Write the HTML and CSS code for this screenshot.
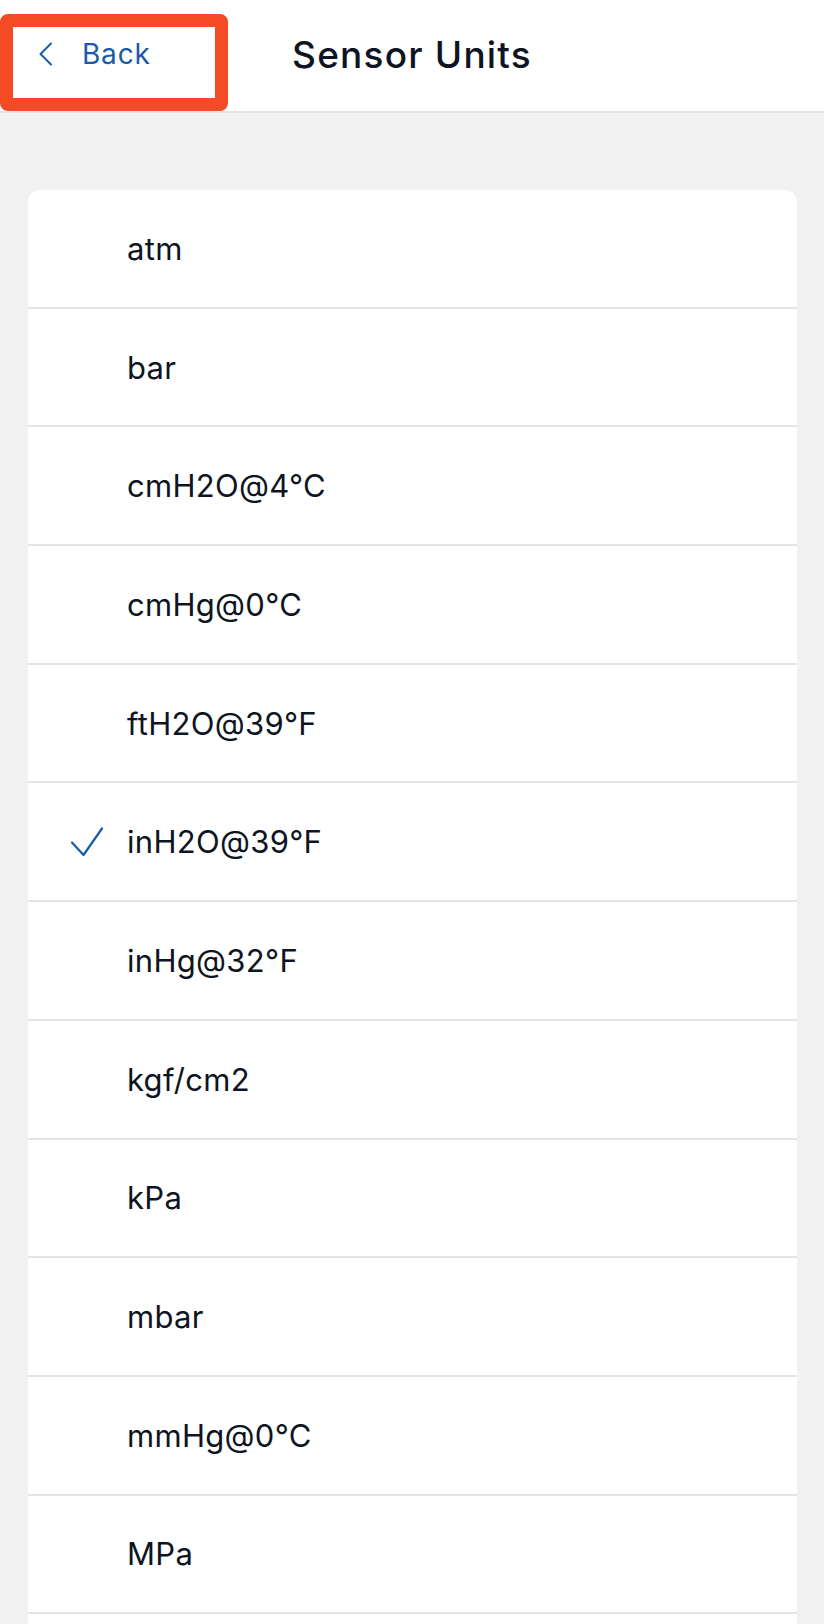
FILE: index.html
```html
<!DOCTYPE html>
<html lang="en">
<head>
<meta charset="utf-8">
<title>Sensor Units</title>
<link rel="stylesheet" href="styles.css">
</head>
<body>
<header class="topbar">
  <div class="topbar-left">
    <button class="back" type="button">
      <svg class="back-icon" width="16" height="24" viewBox="0 0 16 24" aria-hidden="true">
        <path d="M13 1.5 L2.5 12 L13 22.5" fill="none" stroke="currentColor" stroke-width="2" stroke-linecap="round" stroke-linejoin="round"/>
      </svg>
      <span>Back</span>
    </button>
  </div>
  <h1 class="title">Sensor Units</h1>
  <div class="topbar-right"></div>
  <div class="highlight"></div>
</header>

<main class="content">
  <ul class="list">
    <li class="row"><span class="check"></span><span class="label">atm</span></li>
    <li class="row"><span class="check"></span><span class="label">bar</span></li>
    <li class="row"><span class="check"></span><span class="label">cmH2O@4°C</span></li>
    <li class="row"><span class="check"></span><span class="label">cmHg@0°C</span></li>
    <li class="row"><span class="check"></span><span class="label">ftH2O@39°F</span></li>
    <li class="row selected">
      <span class="check">
        <svg width="34" height="30" viewBox="0 0 34 30" aria-hidden="true">
          <path d="M2 15.5 L13.5 28 L32 1.5" fill="none" stroke="currentColor" stroke-width="2.2" stroke-linecap="round" stroke-linejoin="round"/>
        </svg>
      </span>
      <span class="label">inH2O@39°F</span>
    </li>
    <li class="row"><span class="check"></span><span class="label">inHg@32°F</span></li>
    <li class="row"><span class="check"></span><span class="label">kgf/cm2</span></li>
    <li class="row"><span class="check"></span><span class="label">kPa</span></li>
    <li class="row"><span class="check"></span><span class="label">mbar</span></li>
    <li class="row"><span class="check"></span><span class="label">mmHg@0°C</span></li>
    <li class="row"><span class="check"></span><span class="label">MPa</span></li>
  </ul>
</main>
</body>
</html>
```

FILE: styles.css
```css
* {
  box-sizing: border-box;
}

html, body {
  margin: 0;
  padding: 0;
}

body {
  background: #f1f1f2;
  font-family: Inter, "Noto Sans", "Liberation Sans", sans-serif;
  color: #0e1422;
}

.topbar {
  position: relative;
  height: 113px;
  background: #ffffff;
  border-bottom: 2px solid #e3e3e8;
  display: grid;
  grid-template-columns: 1fr auto 1fr;
  align-items: center;
  padding-bottom: 3px;
}

.topbar-left {
  padding-left: 38px;
}

.back {
  display: flex;
  align-items: center;
  gap: 28px;
  border: 0;
  background: transparent;
  padding: 0;
  color: #1c5aa9;
  font-family: inherit;
  font-size: 28px;
  font-weight: 400;
  letter-spacing: 0.8px;
  cursor: pointer;
}

.back-icon {
  display: block;
}

.title {
  margin: 0;
  font-size: 37px;
  font-weight: 500;
  color: #0e1422;
  letter-spacing: 1.2px;
}

.highlight {
  position: absolute;
  left: 0;
  top: 14px;
  width: 228px;
  height: 97px;
  border: 13.5px solid #f44a25;
  border-radius: 8px;
  pointer-events: none;
}

.content {
  padding: 77px 27px 0 28px;
}

.list {
  list-style: none;
  margin: 0;
  padding: 0 0 40px;
  background: #ffffff;
  border-radius: 12px 12px 0 0;
}

.row {
  height: 118.7px;
  border-bottom: 2px solid #e3e3e8;
  display: flex;
  align-items: center;
  padding-left: 42px;
}

.check {
  width: 57px;
  flex: none;
  display: flex;
  align-items: center;
  color: #1c5aa9;
}

.check svg {
  display: block;
}

.label {
  font-size: 31px;
  font-weight: 400;
  color: #0e1422;
  letter-spacing: 0.3px;
}
```
